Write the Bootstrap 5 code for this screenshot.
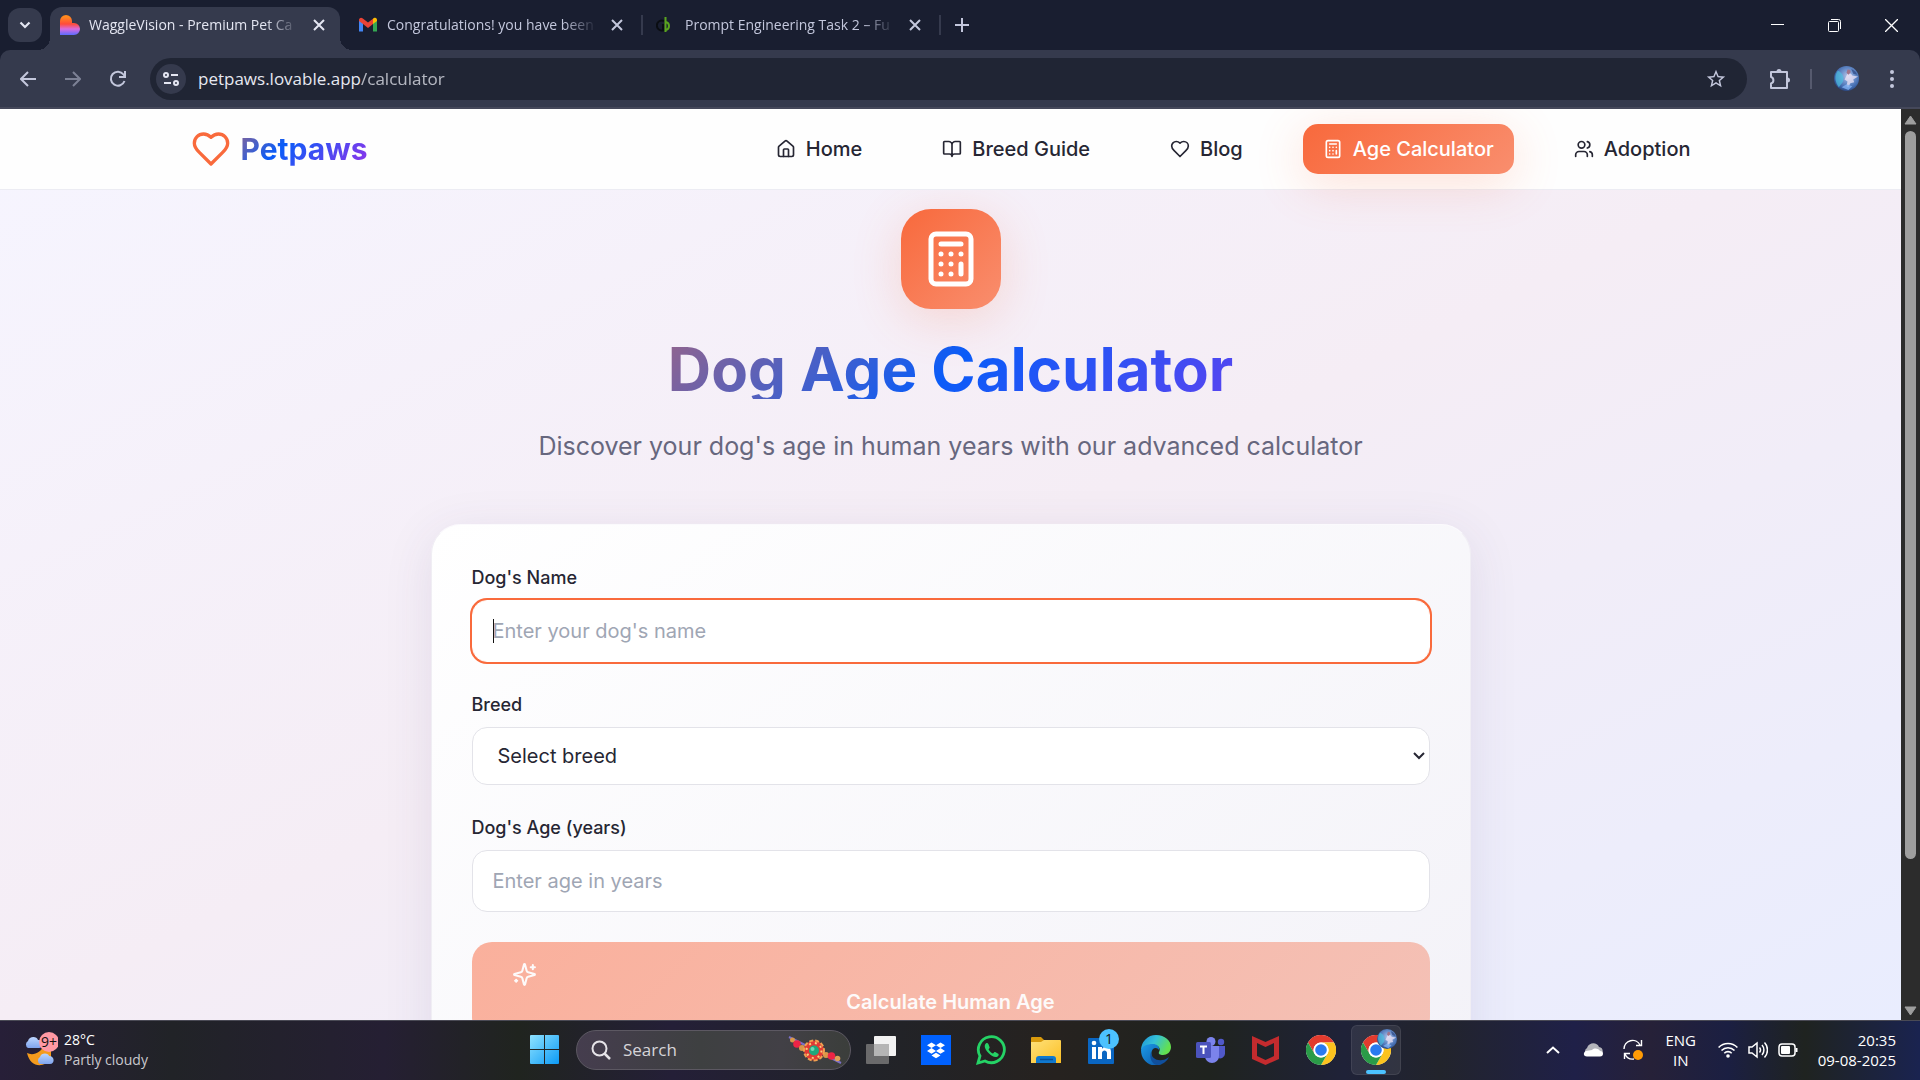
<!DOCTYPE html>
<html lang="en">
<head>
<meta charset="utf-8">
<meta name="viewport" content="width=device-width, initial-scale=1">
<title>Petpaws - Dog Age Calculator</title>
<link href="https://cdn.jsdelivr.net/npm/bootstrap@5.3.0/dist/css/bootstrap.min.css" rel="stylesheet">
<style>
  :root { --ui: "Open Sans", "Noto Sans", sans-serif; --bar: #353a4d; --strip: #191e30; --orange: #f96a3c; }
  body { font-family: Inter, sans-serif; font-size: 20px; line-height: 28px; color: #262633; background: var(--strip); }
  svg { display: block; flex: none; }
  .line-icon { fill: none; stroke: currentColor; stroke-width: 2; stroke-linecap: round; stroke-linejoin: round; }
  .bare { background: none; border: 0; padding: 0; color: inherit; }

  /* browser frame */
  .tab-strip { height: 50px; font: 14px/20px var(--ui); color: #c3c7dc; }
  .tab-menu { width: 34px; height: 34px; border-radius: 12px; background: var(--bar); color: #e4e6f2; }
  .browser-tab { width: 290px; height: 43px; padding: 0 10px 7px; gap: 9px; position: relative; }
  .browser-tab .tab-title { flex: 1; min-width: 0; overflow: hidden; white-space: nowrap; -webkit-mask-image: linear-gradient(90deg, #000 84%, transparent); mask-image: linear-gradient(90deg, #000 84%, transparent); }
  .browser-tab.is-active { background: var(--bar); border-radius: 12px 12px 0 0; color: #e4e6f2; }
  .browser-tab.is-active::before, .browser-tab.is-active::after { content: ""; position: absolute; bottom: 0; width: 12px; height: 12px; }
  .browser-tab.is-active::before { left: -12px; background: radial-gradient(circle at 0 0, transparent 12px, var(--bar) 12px); }
  .browser-tab.is-active::after { right: -12px; background: radial-gradient(circle at 100% 0, transparent 12px, var(--bar) 12px); }
  .tab-close { width: 22px; height: 22px; }
  .tab-rule { width: 2px; height: 20px; margin: 0 3px; background: var(--bar); }
  .tool-rule { width: 2px; height: 20px; margin: 0 8px; background: #565a6e; }
  .tab-gap { width: 8px; }
  .win-btn { width: 57px; height: 40px; color: #fff; }
  .toolbar { height: 59px; padding: 0 6px 0 5px; background: var(--bar); border-bottom: 2px solid #45485a; border-radius: 10px 10px 0 0; color: #c3c7dc; }
  .tool-btn { width: 45px; height: 42px; }
  .omnibox { height: 42px; margin: 0 10px; border-radius: 21px; background: #202534; padding: 0 20px 0 6px; font: 17px/24px var(--ui); }
  .omnibox .address { color: #e6e8f0; }
  .site-info { width: 30px; height: 30px; border-radius: 50%; background: var(--bar); color: #e4e6f2; }
  .avatar { width: 25px; height: 25px; }

  /* scrollbar */
  .scroll-rail { width: 19px; background: #2c2c2c; color: #9e9e9e; }
  .scroll-end { height: 22px; }
  .scroll-thumb { width: 11px; height: 84%; border-radius: 6px; background: #9e9e9e; }

  /* site */
  .site { background: linear-gradient(to bottom right, #f6f5ff 0%, #f5edf5 50%, #e9edfe 100%); overflow: hidden; }
  .site-header { height: 80px; background: #fefefe; box-shadow: 0 1px 0 #ececf3; z-index: 2; }
  .site-width { width: 80%; max-width: 1520px; }
  .brand-link { gap: 10px; }
  .brand-heart { color: var(--orange); }
  .brand-name { font-size: 30px; line-height: 40px; font-weight: 700; }
  .tri-text { background: linear-gradient(135deg, #f96a3c 0%, #0a5cf8 50%, #9333ea 100%); -webkit-background-clip: text; background-clip: text; color: transparent; }
  .site-link { height: 50px; padding: 0 20px; gap: 10px; border-radius: 15px; font-size: 20px; font-weight: 500; color: #262633; text-decoration: none; }
  .site-link.is-active { color: #fff; background: linear-gradient(135deg, #f8693c, #f98e6e); box-shadow: 0 10px 50px rgba(249, 106, 60, .2); }
  .site-nav { gap: 40px; }
  .hero-width { width: 100%; max-width: 1040px; padding-top: 20px; }
  .hero-badge { width: 100px; height: 100px; border-radius: 30px; color: #fff; background: linear-gradient(135deg, #f8693c, #f98e6e); box-shadow: 0 10px 50px rgba(249, 106, 60, .2); margin-bottom: 30px; }
  .hero-title { width: 100%; font-size: 60px; line-height: 60px; font-weight: 700; margin-bottom: 30px; }
  .hero-text { font-size: 25px; line-height: 35px; color: #67677e; margin-bottom: 60px; }
  .calc-card { width: 100%; padding: 40px; gap: 30px; border: 1px solid #f0eef4; border-top-color: #fbfafd; border-radius: 30px; background: linear-gradient(145deg, #ffffff, #f3f2f8); box-shadow: 0 10px 50px rgba(70, 60, 110, .1); }
  .calc-card label { font-size: 18px; line-height: 25px; font-weight: 500; margin-bottom: 10px; }
  .calc-field.form-control, .calc-field.form-select { border: 1px solid #e3e3e9; border-radius: 15px; background-color: #fff; color: #262633; font-size: 20px; line-height: 30px; padding: 15px 20px; box-shadow: none; }
  .calc-field.form-select { padding: 13px 25px; background-image: url("data:image/svg+xml,%3csvg xmlns='http://www.w3.org/2000/svg' viewBox='0 0 12 12'%3e%3cpath d='M1 3l5 5 5-5' fill='none' stroke='%23262633' stroke-width='2'/%3e%3c/svg%3e"); background-position: right 4px center; background-size: 12px 12px; }
  .calc-field.form-control::placeholder { color: #9fa6b4; }
  .calc-field.form-control.has-ring { border-color: #fff; box-shadow: 0 0 0 2px var(--orange); }
  .caret { position: absolute; left: 21px; top: 19px; width: 1px; height: 24px; background: #111; }
  .calc-btn.btn { border: 0; border-radius: 20px; padding: 20px 40px; font-size: 20px; line-height: 30px; font-weight: 600; color: #fdfafa; background: linear-gradient(135deg, #fab09c, #f4c1b6); opacity: 1; }

  /* taskbar */
  .taskbar { height: 60px; padding-bottom: 2px; display: grid; grid-template-columns: 1fr auto 1fr; border-top: 1px solid #4a4a55; color: #fff; font: 14px/20px var(--ui); background: linear-gradient(90deg, #271f38 0%, #212327 9%, #251f33 20%, #20241f 27%, #241f37 35%, #212329 45%, #26221f 55%, #1f231f 63%, #1f2238 70%, #22242c 75%, #1f2048 82%, #262138 86%, #1b1f42 90%, #1f2320 94%, #1a2350 100%); }
  .task-slot { width: 55px; height: 50px; }
  .task-slot .active-app { width: 50px; height: 50px; border-radius: 6px; background: rgba(255, 255, 255, .08); border: 1px solid rgba(255, 255, 255, .08); }
  .task-search { width: 275px; height: 40px; margin: 0 2px 0 4px; padding: 0 8px 0 14px; border-radius: 20px; border: 1px solid #5c5862; background: linear-gradient(90deg, #453d4e, #3e4041 45%, #424046 75%, #3b3e3b); }
  .task-search input { background: none; border: 0; outline: 0; width: 120px; color: #fff; font-size: 17px; line-height: 24px; }
  .task-search input::placeholder { color: #d6d4d8; opacity: 1; }
  .weather { padding-left: 24px; gap: 6px; }
  .weather-sub { color: #c9c8cd; }
  .tray { padding-right: 24px; }
  .tray-slot { width: 40px; }
  .tray-lang { width: 56px; font-size: 15px; }
  .tray-mini { width: 30px; }
  .tray-clock { font-size: 15px; margin-left: 15px; }
</style>
</head>
<body class="vh-100 d-flex flex-column overflow-hidden">

<svg width="0" height="0" class="position-absolute" aria-hidden="true">
  <defs>
    <linearGradient id="lovable" x1="0" y1="0" x2="0" y2="1"><stop offset=".1" stop-color="#ff8a1f"/><stop offset=".45" stop-color="#ff4b3a"/><stop offset=".7" stop-color="#d96be0"/><stop offset="1" stop-color="#5a6cff"/></linearGradient>
    <linearGradient id="winblue" x1="0" y1="0" x2="1" y2="1"><stop offset="0" stop-color="#8fe3ff"/><stop offset="1" stop-color="#0c9af5"/></linearGradient>
    <linearGradient id="edgeTop" x1="0" y1="0" x2="1" y2=".4"><stop offset="0" stop-color="#1b8fd8"/><stop offset=".5" stop-color="#35c1d8"/><stop offset="1" stop-color="#63e04f"/></linearGradient>
    <linearGradient id="edgeLow" x1="0" y1="0" x2="1" y2="1"><stop offset="0" stop-color="#1c9be8"/><stop offset="1" stop-color="#0b56a8"/></linearGradient>
    <linearGradient id="folder" x1="0" y1="0" x2="1" y2="1"><stop offset="0" stop-color="#ffe17a"/><stop offset="1" stop-color="#fbbf24"/></linearGradient>
    <radialGradient id="ava" cx=".55" cy=".4" r=".7"><stop offset="0" stop-color="#b9c4e6"/><stop offset=".35" stop-color="#7396cf"/><stop offset=".7" stop-color="#3f68ac"/><stop offset="1" stop-color="#1d2c5c"/></radialGradient>
    <linearGradient id="cloud" x1="0" y1="0" x2="0" y2="1"><stop offset="0" stop-color="#bcd6ff"/><stop offset="1" stop-color="#7fa4ee"/></linearGradient>
    <symbol id="i-close" viewBox="0 0 22 22"><path d="M6 6l10 10M16 6L6 16" stroke="currentColor" stroke-width="2" fill="none"/></symbol>
    <symbol id="i-heart" viewBox="0 0 24 24"><path d="M19 14c1.49-1.46 3-3.21 3-5.5A5.5 5.5 0 0 0 16.500 3c-1.760 0-3 .5-4.500 2-1.500-1.500-2.740-2-4.500-2A5.500 5.500 0 0 0 2 8.500c0 2.300 1.500 4.050 3 5.500l7 7Z"/></symbol>
    <symbol id="i-calc" viewBox="0 0 24 24"><rect width="16" height="20" x="4" y="2" rx="2"/><path d="M8 6h8M16 14v4M16 10h.01M12 10h.01M8 10h.01M12 14h.01M8 14h.01M12 18h.01M8 18h.01"/></symbol>
    <symbol id="i-avatar" viewBox="0 0 26 26"><circle cx="13" cy="13" r="13" fill="url(#ava)"/><path d="M4 5c5 2 7 7 5 12l-4 5C1 17 0 10 4 5z" fill="#4cc3e2" opacity=".65"/><path d="M14 8c2-1 4 0 5 2l6 1-5 3 1 3-4 1-2 4-2-1 1-5-3-2z" fill="#efe4f5" opacity=".75"/><path d="M14 4c2-1 4 1 3 3l-2 2-2-2z" fill="#a0748a"/><path d="M8 22l5-3 6 2-4 4z" fill="#7fb0f2" opacity=".8"/><path d="M18 3c3 1 5 3 6 6l-4-1z" fill="#233a75" opacity=".6"/></symbol>
    <symbol id="i-chrome" viewBox="0 0 30 30"><circle cx="15" cy="15" r="15" fill="#fff"/><path d="M2 7.500A15 15 0 0 1 28 7.500H15a7.500 7.500 0 0 0-6.500 11.200z" fill="#e23b2e"/><path d="M28 7.500A15 15 0 0 1 15 30l6.500-11.200A7.500 7.500 0 0 0 15 7.500z" fill="#fcc31e"/><path d="M2 7.500l6.500 11.200a7.500 7.500 0 0 0 13 0L15 30A15 15 0 0 1 2 7.500z" fill="#2a9b48"/><circle cx="15" cy="15" r="7.500" fill="#fff"/><circle cx="15" cy="15" r="5.800" fill="#2a7af0"/></symbol>
  </defs>
</svg>

<div class="tab-strip d-flex align-items-center ps-2 flex-shrink-0">
  <button class="bare tab-menu d-flex align-items-center justify-content-center" aria-label="Search tabs"><svg width="12" height="12" viewBox="0 0 12 12"><path d="M1.500 3.500L6 8l4.500-4.500" fill="none" stroke="currentColor" stroke-width="2.200"/></svg></button>
  <div class="tab-gap"></div>
  <div class="browser-tab is-active d-flex align-items-center align-self-end">
    <svg width="20" height="20" viewBox="0 0 20 20"><path d="M0 6a6 6 0 0 1 12 0v2h2a6 6 0 0 1 0 12H0z" fill="url(#lovable)"/></svg>
    <span class="tab-title">WaggleVision - Premium Pet Ca</span>
    <button class="bare tab-close" aria-label="Close tab"><svg width="22" height="22"><use href="#i-close"/></svg></button>
  </div>
  <div class="tab-gap"></div>
  <div class="browser-tab d-flex align-items-center align-self-end">
    <svg width="20" height="20" viewBox="0 0 20 20"><path d="M1 16.500h4V8L1 5z" fill="#4285f4"/><path d="M15 16.500h4V5l-4 3z" fill="#34a853"/><path d="M1 5c0-2 2-3 3.500-1.800L10 7.500l5-3.800V9l-5 4-5-4-4-3z" fill="#ea4335"/><path d="M15 3.700l.8-.6C17.500 2 19 3 19 5v1l-4 3z" fill="#fbbc04"/></svg>
    <span class="tab-title">Congratulations! you have been</span>
    <button class="bare tab-close" aria-label="Close tab"><svg width="22" height="22"><use href="#i-close"/></svg></button>
  </div>
  <div class="tab-rule"></div>
  <div class="browser-tab d-flex align-items-center align-self-end">
    <svg width="20" height="20" viewBox="0 0 20 20"><path d="M8 6a5 5 0 1 0 0 9M7 9v6" fill="none" stroke="#0a0d12" stroke-width="2"/><path d="M9.500 2v15M10 7c4 1 4 7 0 8" fill="none" stroke="#5aa51e" stroke-width="2"/></svg>
    <span class="tab-title">Prompt Engineering Task 2 – Fu</span>
    <button class="bare tab-close" aria-label="Close tab"><svg width="22" height="22"><use href="#i-close"/></svg></button>
  </div>
  <div class="tab-rule"></div>
  <button class="bare ms-2 tab-close" aria-label="New tab"><svg width="22" height="22" viewBox="0 0 22 22"><path d="M10 4v14M3 11h14" stroke="currentColor" stroke-width="2"/></svg></button>
  <div class="ms-auto d-flex">
    <button class="bare win-btn d-flex align-items-center justify-content-center" aria-label="Minimize"><svg width="13" height="13" viewBox="0 0 13 13"><path d="M0 5.500h13" stroke="currentColor"/></svg></button>
    <button class="bare win-btn d-flex align-items-center justify-content-center" aria-label="Restore"><svg width="14" height="14" viewBox="0 0 14 14" fill="none" stroke="currentColor"><rect x=".5" y="3.500" width="10" height="10" rx="1"/><path d="M3 1.500h7.500a2 2 0 0 1 2 2V11"/></svg></button>
    <button class="bare win-btn d-flex align-items-center justify-content-center" aria-label="Close"><svg width="13" height="13" viewBox="0 0 13 13"><path d="M0 0l13 13M13 0L0 13" stroke="currentColor" stroke-width="1.300"/></svg></button>
  </div>
</div>

<div class="toolbar d-flex align-items-center flex-shrink-0">
  <button class="bare tool-btn d-flex align-items-center justify-content-center" aria-label="Back"><svg width="16" height="16" viewBox="0 0 16 16" fill="none" stroke="currentColor" stroke-width="2"><path d="M16 8H1.500M8 1L1 8l7 7"/></svg></button>
  <button class="bare tool-btn d-flex align-items-center justify-content-center opacity-50" aria-label="Forward"><svg width="16" height="16" viewBox="0 0 16 16" fill="none" stroke="currentColor" stroke-width="2"><path d="M0 8h14.500M8 1l7 7-7 7"/></svg></button>
  <button class="bare tool-btn d-flex align-items-center justify-content-center" aria-label="Reload"><svg width="18" height="18" viewBox="0 0 18 18" fill="none" stroke="currentColor" stroke-width="2"><path d="M15.500 11A7 7 0 1 1 14.500 4.500L16 6.500M16 1v6h-6"/></svg></button>
  <div class="omnibox flex-grow-1 d-flex align-items-center">
    <span class="site-info d-flex align-items-center justify-content-center"><svg width="16" height="16" viewBox="0 0 16 16" fill="none" stroke="currentColor" stroke-width="2"><circle cx="3" cy="4" r="2"/><path d="M8 4h7M1 12h7"/><circle cx="13" cy="12" r="2"/></svg></span>
    <span class="address flex-grow-1 ps-2 ms-1">petpaws.lovable.app<span class="opacity-75">/calculator</span></span>
    <button class="bare" aria-label="Bookmark"><svg width="22" height="22" viewBox="0 0 24 24" fill="currentColor"><path d="M22 9.240l-7.190-.62L12 2 9.190 8.630 2 9.240l5.460 4.730L5.820 21 12 17.270 18.180 21l-1.630-7.030L22 9.240zM12 15.400l-3.760 2.270 1-4.280-3.320-2.880 4.380-.38L12 6.100l1.710 4.040 4.380.38-3.320 2.880 1 4.280L12 15.400z"/></svg></button>
  </div>
  <button class="bare tool-btn d-flex align-items-center justify-content-center" aria-label="Extensions"><svg width="22" height="22" viewBox="0 0 22 22"><path d="M2 4h16v16H2v-4.500a3.400 3.400 0 0 0 0-6.500z" fill="none" stroke="currentColor" stroke-width="2" stroke-linejoin="round"/><path d="M7.500 3.500a2.500 2.500 0 0 1 5 0zM18.500 9.500a2.500 2.500 0 0 1 0 5z" fill="currentColor"/></svg></button>
  <div class="tool-rule"></div>
  <button class="bare tool-btn d-flex align-items-center justify-content-center ms-1" aria-label="Profile"><svg class="avatar"><use href="#i-avatar"/></svg></button>
  <button class="bare tool-btn d-flex align-items-center justify-content-center" aria-label="Menu"><svg width="4" height="18" viewBox="0 0 4 18" fill="currentColor"><circle cx="2" cy="2" r="2"/><circle cx="2" cy="9" r="2"/><circle cx="2" cy="16" r="2"/></svg></button>
</div>

<div class="d-flex flex-grow-1 overflow-hidden">
  <div class="site flex-grow-1 d-flex flex-column">
    <header class="site-header position-relative flex-shrink-0">
      <div class="site-width mx-auto h-100 d-flex align-items-center justify-content-between">
        <a href="#" class="brand-link tri-text d-flex align-items-center text-decoration-none">
          <svg width="40" height="40" class="line-icon brand-heart"><use href="#i-heart"/></svg>
          <span class="brand-name">Petpaws</span>
        </a>
        <nav class="site-nav d-flex">
          <a href="#" class="site-link d-flex align-items-center"><svg width="20" height="20" viewBox="0 0 24 24" class="line-icon"><path d="M15 21v-8a1 1 0 0 0-1-1h-4a1 1 0 0 0-1 1v8"/><path d="M3 10a2 2 0 0 1 .709-1.528l7-5.999a2 2 0 0 1 2.582 0l7 5.999A2 2 0 0 1 21 10v9a2 2 0 0 1-2 2H5a2 2 0 0 1-2-2z"/></svg>Home</a>
          <a href="#" class="site-link d-flex align-items-center"><svg width="20" height="20" viewBox="0 0 24 24" class="line-icon"><path d="M12 7v14M3 18a1 1 0 0 1-1-1V4a1 1 0 0 1 1-1h5a4 4 0 0 1 4 4 4 4 0 0 1 4-4h5a1 1 0 0 1 1 1v13a1 1 0 0 1-1 1h-6a3 3 0 0 0-3 3 3 3 0 0 0-3-3z"/></svg>Breed Guide</a>
          <a href="#" class="site-link d-flex align-items-center"><svg width="20" height="20" class="line-icon"><use href="#i-heart"/></svg>Blog</a>
          <a href="#" class="site-link is-active d-flex align-items-center"><svg width="20" height="20" class="line-icon"><use href="#i-calc"/></svg>Age Calculator</a>
          <a href="#" class="site-link d-flex align-items-center"><svg width="20" height="20" viewBox="0 0 24 24" class="line-icon"><path d="M16 21v-2a4 4 0 0 0-4-4H6a4 4 0 0 0-4 4v2M22 21v-2a4 4 0 0 0-3-3.870M16 3.130a4 4 0 0 1 0 7.750"/><circle cx="9" cy="7" r="4"/></svg>Adoption</a>
        </nav>
      </div>
    </header>

    <main class="hero-width mx-auto d-flex flex-column align-items-center">
      <div class="hero-badge d-flex align-items-center justify-content-center flex-shrink-0"><svg width="60" height="60" class="line-icon"><use href="#i-calc"/></svg></div>
      <h1 class="hero-title tri-text text-center">Dog Age Calculator</h1>
      <p class="hero-text text-center">Discover your dog's age in human years with our advanced calculator</p>
      <form class="calc-card d-flex flex-column">
        <div>
          <label for="dogName" class="d-block">Dog's Name</label>
          <div class="position-relative">
            <input id="dogName" type="text" class="form-control calc-field has-ring" placeholder="Enter your dog's name">
            <span class="caret"></span>
          </div>
        </div>
        <div>
          <label for="breed" class="d-block">Breed</label>
          <select id="breed" class="form-select calc-field"><option>Select breed</option></select>
        </div>
        <div>
          <label for="dogAge" class="d-block">Dog's Age (years)</label>
          <input id="dogAge" type="text" inputmode="numeric" class="form-control calc-field" placeholder="Enter age in years">
        </div>
        <button type="submit" class="btn calc-btn" disabled>
          <svg width="25" height="25" viewBox="0 0 24 24" class="line-icon"><path d="M9.937 15.500A2 2 0 0 0 8.500 14.063l-6.135-1.582a.5.5 0 0 1 0-.962L8.500 9.936A2 2 0 0 0 9.937 8.500l1.582-6.135a.5.5 0 0 1 .963 0L14.063 8.500A2 2 0 0 0 15.500 9.937l6.135 1.581a.5.5 0 0 1 0 .964L15.500 14.063a2 2 0 0 0-1.437 1.437l-1.582 6.135a.5.5 0 0 1-.963 0zM20 3v4M22 5h-4M4 17v2M5 18H3"/></svg>
          Calculate Human Age
        </button>
      </form>
    </main>
  </div>
  <div class="scroll-rail d-flex flex-column align-items-center flex-shrink-0">
    <div class="scroll-end d-flex align-items-center flex-shrink-0"><svg width="13" height="10" viewBox="0 0 13 10"><path d="M6.500 1L12 9H1z" fill="currentColor" stroke="currentColor" stroke-linejoin="round"/></svg></div>
    <div class="flex-grow-1 w-100 d-flex justify-content-center"><div class="scroll-thumb"></div></div>
    <div class="scroll-end d-flex align-items-center flex-shrink-0"><svg width="13" height="14" viewBox="0 0 13 14"><path d="M6.500 13L12 5H1z" fill="currentColor" stroke="currentColor" stroke-linejoin="round"/></svg></div>
  </div>
</div>

<footer class="taskbar align-items-center flex-shrink-0">
  <div class="weather d-flex align-items-center">
    <svg width="34" height="38" viewBox="0 0 34 38"><path d="M3 22c6 3 14 0 17-8 0-1 1-2 2-2h5v16c-8 10-21 8-24-6z" fill="#f49b1d"/><path d="M4 17a4 4 0 0 1 0-7c1-5 9-5 10-1 5-1 6 8 1 8z" fill="url(#cloud)"/><path d="M16 33a4 4 0 0 1 0-7c1-5 9-4 9-1 6 0 6 8 1 8z" fill="url(#cloud)"/><circle cx="25" cy="11" r="10" fill="#ff99a4"/><text x="25" y="16" text-anchor="middle" font-family="Open Sans" font-size="14" fill="#111">9+</text></svg>
    <div><div>28°C</div><div class="weather-sub">Partly cloudy</div></div>
  </div>
  <div class="d-flex align-items-center">
    <div class="task-slot d-flex align-items-center justify-content-center"><svg width="29" height="29" viewBox="0 0 29 29"><path d="M1 0h13v14H0V1a1 1 0 0 1 1-1zM15 0h13a1 1 0 0 1 1 1v13H15zM0 15h14v14H1a1 1 0 0 1-1-1zM15 15h14v13a1 1 0 0 1-1 1H15z" fill="url(#winblue)"/></svg></div>
    <div class="task-search d-flex align-items-center">
      <svg width="20" height="20" viewBox="0 0 20 20" fill="none" stroke="#e6e4e8" stroke-width="2"><circle cx="8.500" cy="8.500" r="7"/><path d="M13.500 13.500L19 19" stroke-width="2.500"/></svg>
      <input type="search" class="ms-2 ps-1 pe-0" placeholder="Search" aria-label="Search">
      <svg width="54" height="28" viewBox="0 0 54 28" class="ms-auto"><path d="M1 1l52 26" stroke="#7b6fc9" stroke-width="2"/><circle cx="4.500" cy="4" r="2.500" fill="#d9974a"/><circle cx="9" cy="8" r="3.800" fill="#ee2445"/><circle cx="14" cy="12" r="3" fill="#d9974a"/><circle cx="38" cy="19" r="3" fill="#d9974a"/><circle cx="43.500" cy="20" r="3.800" fill="#ee2445"/><circle cx="49.500" cy="22.500" r="2.800" fill="#e0a055"/><circle cx="26" cy="14.500" r="10" fill="#e23a34" stroke="#f0a050" stroke-width="2" stroke-dasharray="4 2"/><circle cx="26" cy="14.500" r="7.500" fill="none" stroke="#f7cf7a" stroke-width="2" stroke-dasharray="2 4"/><circle cx="26" cy="14.500" r="5" fill="#1fa87c"/><circle cx="24.500" cy="13" r="2" fill="#6fd8b4"/></svg>
    </div>
    <div class="task-slot d-flex align-items-center justify-content-center"><svg width="30" height="28" viewBox="0 0 30 28"><rect x="8" width="22" height="20" rx="1" fill="#f2f2f2"/><rect y="8" width="23" height="20" rx="1" fill="#777" opacity=".85"/><rect x="8" y="8" width="15" height="12" fill="#b5b5b5"/></svg></div>
    <div class="task-slot d-flex align-items-center justify-content-center"><svg width="30" height="30" viewBox="0 0 30 30"><rect width="30" height="30" fill="#0061fe"/><path d="M10.500 7.500L15 10.300l-4.500 2.800L6 10.300zM19.500 7.500l4.500 2.800-4.500 2.800-4.500-2.800zM10.500 13.100L15 15.900l-4.500 2.800L6 15.900zM19.500 13.100l4.500 2.800-4.500 2.800-4.500-2.800zM15 17.700l4.500 2.800-4.500 2.800-4.500-2.800z" fill="#fff"/></svg></div>
    <div class="task-slot d-flex align-items-center justify-content-center"><svg width="30" height="30" viewBox="0 0 30 30"><path d="M2 28l2-7A13 13 0 1 1 9 26z" fill="none" stroke="#25d366" stroke-width="2.800"/><path d="M10.500 8c-3 2-2 6 2 10s8 5.500 10 2.500c.5-1.500 0-1.700-.7-2.100l-2.600-1.300c-.7-.3-1 .1-1.800 1.200-.5.600-3-.8-4.700-3.600-.4-.6.8-1.200 1-2.200l-1.200-3.300c-.4-1-1.200-1.400-2-1.200z" fill="#25d366"/></svg></div>
    <div class="task-slot d-flex align-items-center justify-content-center"><svg width="30" height="26" viewBox="0 0 30 26"><path d="M0 1a1 1 0 0 1 1-1h9l3 3v4H0z" fill="#d99a0c"/><path d="M0 5h10l3-2h16a1 1 0 0 1 1 1v22H0z" fill="url(#folder)"/><path d="M5 26v-4a3 3 0 0 1 3-3h14a3 3 0 0 1 3 3v4z" fill="#1079cf"/><path d="M9 22.500h13" stroke="#0a4f96" stroke-width="1.500"/></svg></div>
    <div class="task-slot d-flex align-items-center justify-content-center"><svg width="36" height="38" viewBox="0 0 36 38" class="mb-2"><rect x="5" y="11" width="26" height="26" rx="1" fill="#0a66c2"/><rect x="9" y="20" width="4" height="12" fill="#fff"/><circle cx="11" cy="16" r="2.300" fill="#fff"/><path d="M15 20h4v2c2-3.500 9-3 9 3v7h-4v-6c0-3.500-5-3.500-5 0v6h-4z" fill="#fff"/><circle cx="26" cy="12" r="10" fill="#4cc2ff"/><text x="26" y="17" text-anchor="middle" font-family="Open Sans" font-size="14" fill="#111">1</text></svg></div>
    <div class="task-slot d-flex align-items-center justify-content-center"><svg width="30" height="30" viewBox="0 0 30 30"><path d="M0 15A15 15 0 0 1 15 0c9 0 15 6 15 12 0 5-4 8-8 8-3 0-5-1-4-3 2-3 0-7-5-7C6 10 1 13 0 15z" fill="url(#edgeTop)"/><path d="M0 15c1-4 6-6 12-6 4 0 7 3 6 6-1-2-4-3-6-1-4 5 0 13 9 16-10 3-21-3-21-15z" fill="url(#edgeLow)"/><path d="M10 17c0 6 6 9 11 8 3 0 5-2 7-3-2 4-6 8-12 8-5-1-8-7-6-13z" fill="#104f9c"/></svg></div>
    <div class="task-slot d-flex align-items-center justify-content-center"><svg width="30" height="28" viewBox="0 0 30 28"><circle cx="15" cy="5.500" r="4.500" fill="#7b83eb"/><circle cx="25" cy="6" r="3.200" fill="#5059c9"/><path d="M21 10h8v8a5 5 0 0 1-7 4z" fill="#5059c9"/><path d="M9 10h14v10a7 7 0 0 1-14 0z" fill="#7b83eb"/><rect y="6" width="15" height="16" rx="1.500" fill="#4b53bc"/><path d="M4 10.500h7M7.500 10.500V18" stroke="#fff" stroke-width="2"/></svg></div>
    <div class="task-slot d-flex align-items-center justify-content-center"><svg width="27" height="30" viewBox="0 0 27 30"><path d="M0 1l13.500 6L27 1v23l-13.500 6L0 24zM5 8v13l8.500 4 8.500-4V8l-8.500 4z" fill="#c42b2e" fill-rule="evenodd"/></svg></div>
    <div class="task-slot d-flex align-items-center justify-content-center"><svg width="30" height="30"><use href="#i-chrome"/></svg></div>
    <div class="task-slot d-flex align-items-center justify-content-center"><div class="active-app"><svg width="48" height="48" viewBox="0 0 48 48"><use href="#i-chrome" x="9" y="9" width="30" height="30"/><use href="#i-avatar" x="25" y="3" width="20" height="20"/><rect x="14" y="44" width="20" height="4" rx="2" fill="#4cc2ff"/></svg></div></div>
  </div>
  <div class="tray d-flex align-items-center justify-content-end">
    <div class="tray-slot d-flex justify-content-center"><svg width="14" height="8" viewBox="0 0 14 8"><path d="M1 7l6-5.500L13 7" fill="none" stroke="#fff" stroke-width="2"/></svg></div>
    <div class="tray-slot d-flex justify-content-center"><svg width="20" height="14" viewBox="0 0 20 14"><path d="M4 12a4 4 0 0 1 0-7c2-6 10-6 12-1 4 0 5 6 2 8z" fill="#b4b5bb"/><path d="M4 13.500c-4 0-4-4-1-5.500l6-1c3-3 7-1 8 1 4 0 4 5.500 0 5.500z" fill="#fff"/></svg></div>
    <div class="tray-slot d-flex justify-content-center"><svg width="20" height="22" viewBox="0 0 20 22" fill="none" stroke="#fff" stroke-width="1.400"><path d="M1 10A8.500 8.500 0 0 1 17 6M18.500 1v5.500H13M1.500 20v-5.500H7M2 15a8.500 8.500 0 0 0 9 5"/><circle cx="15" cy="16" r="5" fill="#ff9b05" stroke="none"/></svg></div>
    <div class="tray-lang text-center"><div>ENG</div><div>IN</div></div>
    <div class="tray-mini d-flex justify-content-center ms-1"><svg width="20" height="16" viewBox="0 0 20 16" fill="none" stroke="#fff" stroke-width="1.600"><path d="M.6 5.500a13 13 0 0 1 18.800 0M3.500 8.500a9 9 0 0 1 13 0M6.300 11.200a5.200 5.200 0 0 1 7.400 0"/><circle cx="10" cy="14" r="1.800" fill="#fff" stroke="none"/></svg></div>
    <div class="tray-mini d-flex justify-content-center"><svg width="20" height="18" viewBox="0 0 20 18" fill="none" stroke="#fff" stroke-width="1.500"><path d="M1 6h3l5-4v14l-5-4H1zM11.500 6.500a4 4 0 0 1 0 5M14 4a7.500 7.500 0 0 1 0 10M16.500 1.500a11 11 0 0 1 0 15"/></svg></div>
    <div class="tray-mini d-flex justify-content-center"><svg width="20" height="14" viewBox="0 0 20 14"><rect x="1" y="1" width="16" height="12" rx="3" fill="none" stroke="#fff" stroke-width="1.500"/><rect x="3" y="3" width="9" height="8" rx="1" fill="#fff"/><path d="M18.500 5v4" stroke="#fff" stroke-width="2"/></svg></div>
    <div class="tray-clock text-end"><div>20:35</div><div>09-08-2025</div></div>
  </div>
</footer>

<script src="https://cdn.jsdelivr.net/npm/bootstrap@5.3.0/dist/js/bootstrap.bundle.min.js"></script>
</body>
</html>
